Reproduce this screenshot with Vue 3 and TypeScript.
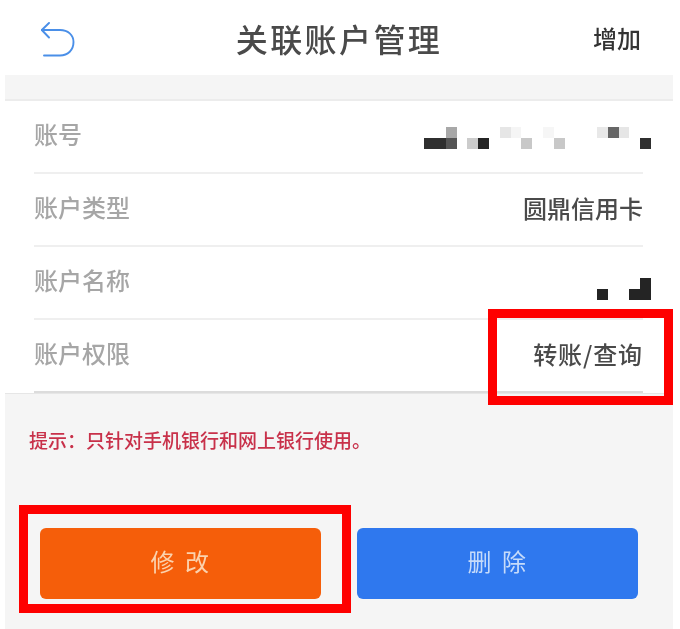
<script setup lang="ts">
interface Block { c: number; r: number; w?: number; color: string }

const accountBlocks: Block[] = [
  { c: 2, r: 0, color: '#a8a8a8' },
  { c: 7, r: 0, color: '#e6e6e6' },
  { c: 8, r: 0, color: '#f5f5f5' },
  { c: 11, r: 0, color: '#f6f6f6' },
  { c: 16, r: 0, color: '#e8e8e8' },
  { c: 17, r: 0, color: '#666666' },
  { c: 18, r: 0, color: '#e6e6e6' },
  { c: 0, r: 1, w: 2, color: '#2f2f2f' },
  { c: 2, r: 1, color: '#555555' },
  { c: 4, r: 1, color: '#cccccc' },
  { c: 5, r: 1, color: '#242424' },
  { c: 9, r: 1, color: '#c8c8c8' },
  { c: 12, r: 1, color: '#c8c8c8' },
  { c: 20, r: 1, color: '#2f2f2f' },
]

const nameBlocks: Block[] = [
  { c: 4, r: 0, color: '#242424' },
  { c: 0, r: 1, color: '#242424' },
  { c: 3, r: 1, w: 2, color: '#242424' },
]

const tipText = '提示\uFF1A只针对手机银行和网上银行使用。'

function cell(b: Block) {
  return {
    gridColumn: `${b.c + 1} / span ${b.w ?? 1}`,
    gridRow: `${b.r + 1}`,
    background: b.color,
  }
}
</script>

<template>
  <div class="page">
    <div class="panel">
      <div class="content">
        <header class="topbar">
          <svg class="back" viewBox="0 0 36 36" width="36" height="36" fill="none" stroke="#4a8fe8" stroke-width="1.9" stroke-linecap="round" stroke-linejoin="round">
            <path d="M8 1 L0.8 8 L8 15.5" />
            <path d="M0.8 8 H19 C27 8 32.5 13 32.5 20 C32.5 28 27 33.5 19 33.5 H3" />
          </svg>
          <h1 class="title">关联账户管理</h1>
          <span class="action">增加</span>
        </header>
        <div class="band"></div>
        <section class="list">
          <div class="row">
            <span class="label">账号</span>
            <div class="mosaic account">
              <i v-for="(b, i) in accountBlocks" :key="i" :style="cell(b)"></i>
            </div>
          </div>
          <div class="row">
            <span class="label">账户类型</span>
            <span class="value">圆鼎信用卡</span>
          </div>
          <div class="row">
            <span class="label">账户名称</span>
            <div class="mosaic name">
              <i v-for="(b, i) in nameBlocks" :key="i" :style="cell(b)"></i>
            </div>
          </div>
          <div class="row last">
            <span class="label">账户权限</span>
            <span class="value wide">转账/查询</span>
          </div>
        </section>
        <p class="tip">{{ tipText }}</p>
        <div class="buttons">
          <button class="btn orange">修 改</button>
          <button class="btn blue">删 除</button>
        </div>
      </div>
      <div class="mark mark-top"></div>
      <div class="mark mark-bottom"></div>
    </div>
  </div>
</template>

<style>
html, body { margin: 0; background: #ffffff; }
</style>

<style scoped>
.page {
  width: 680px;
  height: 629px;
  overflow: hidden;
  padding-left: 5px;
  padding-right: 7px;
  box-sizing: border-box;
  font-family: "Noto Sans CJK SC", "Liberation Sans", sans-serif;
}
.panel {
  position: relative;
  height: 100%;
}
.content {
  height: 100%;
  background: #f5f5f5;
  filter: blur(0.7px);
}
.topbar {
  height: 75px;
  background: #fff;
  display: flex;
  align-items: center;
  justify-content: space-between;
  padding: 0 32px 0 36px;
}
.back { display: block; margin-top: 4px; }
.title {
  margin: 0 0 0 8px;
  font-size: 32px;
  line-height: 50px;
  font-weight: 500;
  letter-spacing: 2.4px;
  color: #4a4a4a;
}
.action {
  font-size: 24px;
  font-weight: 500;
  color: #333;
  line-height: 30px;
  margin-top: 1px;
}
.band { height: 24px; }
.list {
  background: #fff;
  border-top: 2px solid #ececec;
  border-bottom: 1px solid #e6e6e6;
  padding: 0 30px 0 29px;
}
.row {
  height: 71px;
  border-bottom: 2px solid #efefef;
  display: flex;
  align-items: center;
  justify-content: space-between;
}
.row.last { border-bottom-color: #dcdcdc; }
.label {
  font-size: 24px;
  font-weight: 500;
  color: #a6a6a6;
  line-height: 30px;
  margin-top: -5px;
}
.value {
  font-size: 24px;
  font-weight: 500;
  color: #4a4a4a;
  line-height: 30px;
  margin-top: -4px;
}
.wide { letter-spacing: 0.9px; }
.mosaic { display: grid; grid-auto-rows: 11px; margin-right: -8px; }
.account { grid-template-columns: repeat(21, 10.8px); margin-top: 2px; }
.name { grid-template-columns: repeat(5, 10.8px); margin-top: 13px; }
.tip {
  margin: 33px 0 0 24px;
  font-size: 19px;
  font-weight: 500;
  line-height: 26px;
  color: #c8314a;
}
.buttons {
  margin: 75px 0 0 35px;
  display: flex;
  gap: 36px;
}
.btn {
  width: 281px;
  height: 71px;
  border: 0;
  border-radius: 6px;
  font-family: inherit;
  font-size: 24px;
  letter-spacing: 2.5px;
  padding: 0 0 6px 1px;
  color: #fbd2ae;
}
.orange { background: #f55e0a; }
.blue { background: #2f78ee; color: #c6dbfa; }
.mark {
  position: absolute;
  border: 9px solid #fe0000;
  box-sizing: border-box;
}
.mark-top { left: 483px; top: 309px; width: 185px; height: 96px; }
.mark-bottom { left: 14px; top: 505px; width: 332px; height: 108px; }
</style>
